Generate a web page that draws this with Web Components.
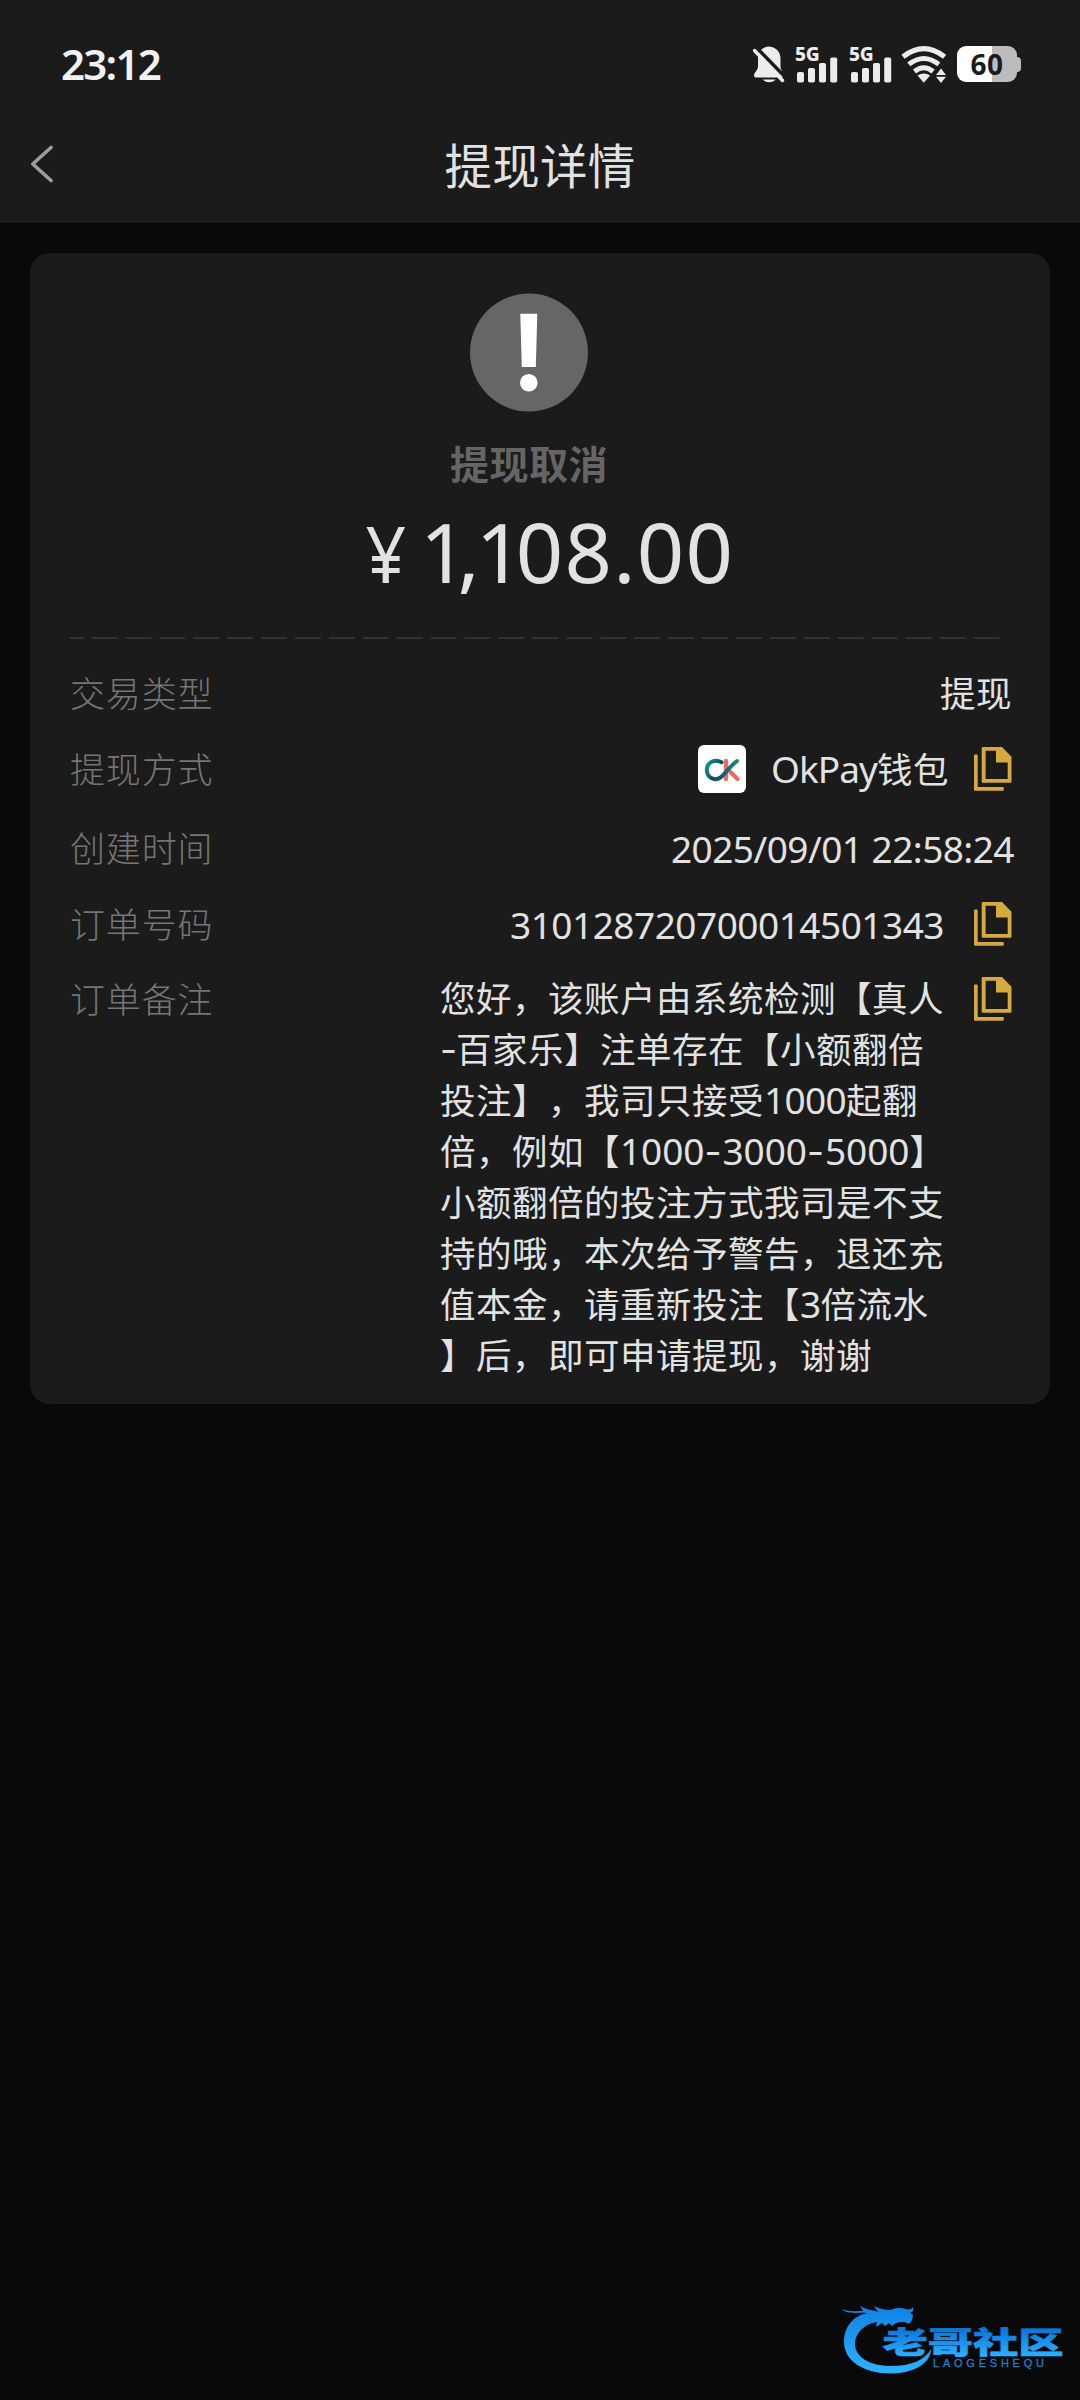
<!DOCTYPE html>
<html lang="zh-CN">
<head>
<meta charset="utf-8">
<title>提现详情</title>
<style>
  html, body { margin: 0; padding: 0; background: #090909; }
  body { width: 1080px; height: 2400px; overflow: hidden; position: relative;
    font-family: "Noto Sans", "Noto Sans CJK SC", sans-serif; color: #e2e2e2; text-spacing-trim: space-all; }
</style>
</head>
<body>
<withdraw-page></withdraw-page>
<script>
const define = (name, html, setup) => {
  const tpl = document.createElement('template');
  tpl.innerHTML = html.trim();
  customElements.define(name, class extends HTMLElement {
    connectedCallback() {
      if (this.shadowRoot) return;
      this.attachShadow({ mode: 'open' }).append(tpl.content.cloneNode(true));
      if (setup) setup(this, this.shadowRoot);
    }
  });
};

/* A run of text spread by letter-spacing to the width given in "w". */
define('fit-run', `<style>:host{display:inline-block;white-space:pre;text-align:left}:host([han]){font-size:35.500px}:host([dash]){font-family:Inter,sans-serif}span{display:inline-block}</style><span><slot></slot></span>`, (el, root) => {
  const span = root.querySelector('span');
  const w = parseFloat(el.getAttribute('w'));
  const n = [...el.textContent].length;
  const natural = span.getBoundingClientRect().width;
  span.style.letterSpacing = ((w - natural) / n) + 'px';
  el.style.width = w + 'px';
});

define('copy-icon', `
<style>:host{display:block;width:38px;height:44px;flex:none}svg{display:block}</style>
<svg width="38" height="44" viewBox="0 0 38 44" fill="#d6aa3f">
  <path fill-rule="evenodd" d="M8.7 0H28L37.5 9.7V34.7a1 1 0 0 1-1 1H8.7a1 1 0 0 1-1-1V1a1 1 0 0 1 1-1zM11.6 3.8V31.9H33.7V15.4H22V3.8z"/>
  <path d="M0 8.6q0-1 1-1H2.7q1 0 1 1V40H28.8q1 0 1 1v1.7q0 1-1 1H1q-1 0-1-1z"/>
</svg>`);

define('okpay-logo', `
<style>:host{display:block;width:48px;height:48px;flex:none;border-radius:6px;background:#fff}svg{display:block}</style>
<svg width="48" height="48" viewBox="0 0 48 48" fill="none" stroke-linecap="round">
  <defs><linearGradient id="g" x1="8" y1="16" x2="40" y2="32" gradientUnits="userSpaceOnUse">
    <stop offset="0" stop-color="#17a08f"/><stop offset=".4" stop-color="#0d4a66"/><stop offset=".6" stop-color="#0f5f72"/><stop offset="1" stop-color="#22b8a0"/></linearGradient></defs>
  <path d="M28 16V34" stroke="#ee6b63" stroke-width="4.4"/>
  <path d="M32.500 27L39.500 34" stroke="#ee6b63" stroke-width="4.200"/>
  <path d="M23.500 17.200C17 13.500 8.800 17 8.800 25C8.800 32.500 16.500 36.500 22.500 32.500C27 29.500 31 22 39 16.200" stroke="url(#g)" stroke-width="4"/>
</svg>`);

define('signal-icon', `
<style>:host{display:block;position:relative;width:43px;height:37px;flex:none}svg{display:block}
b{position:absolute;left:0;top:1px;font:800 19px/15px "Noto Sans",sans-serif;letter-spacing:-.3px;color:#ececec}</style>
<b>5G</b>
<svg width="43" height="37" viewBox="0 0 43 37" fill="#ececec">
  <rect x="2" y="26" width="7" height="10.500" rx="1.800"/><rect x="13" y="22" width="7" height="14.500" rx="1.800"/>
  <rect x="24" y="17" width="7" height="19.500" rx="1.800"/><rect x="35.200" y="11.500" width="7" height="25" rx="1.800"/>
</svg>`);

define('battery-icon', `
<style>:host{display:flex;align-items:center;width:64px;height:36px;flex:none}
.c{width:60px;height:36px;border-radius:9px;background:linear-gradient(90deg,#fff 35.500px,#bbb 35.500px);display:flex;align-items:center;justify-content:center;
font:700 28px/36px "Noto Sans",sans-serif;color:#1b1b1b}
.n{width:4px;height:15px;border-radius:0 4px 4px 0;background:#bbb}</style>
<div class="c"><fit-run w="33">60</fit-run></div><div class="n"></div>`);

define('status-bar', `
<style>:host{display:flex;height:110px;padding:0 59px 0 61px;box-sizing:border-box;justify-content:space-between;align-items:flex-start}
.t{font-weight:600;font-size:42px;line-height:60px;margin-top:34px;color:#f2f2f2}
.i{display:flex;margin-top:46px;align-items:flex-start}
svg{display:block}.bell{margin:-1px 10px 0 0}.s2{margin-left:11px}.wifi{margin:0 10px 0 9px}</style>
<div class="t"><fit-run w="99">23:12</fit-run></div>
<div class="i">
  <svg class="bell" width="32" height="38" viewBox="0 0 32 38">
    <path d="M16 1.500C8.700 2 5 7.500 5 13.500V21C5 25.500 1 27 1 30.500Q1 32.500 3 32.500H28.500Q30.500 32.500 30.500 30.500C30.500 27 27.500 25.500 27.500 21V13.500C27.500 7.500 23.500 2 16 1.500z" fill="#ececec"/>
    <path d="M10 34.500H22.500Q20.500 37.200 16.200 37.200T10 34.500z" fill="#ececec"/>
    <path d="M2.800 2L32 31.800" stroke="#1b1b1b" stroke-width="3.500"/>
    <path d="M1.500 5.500L29.500 35.500" stroke="#ececec" stroke-width="3.400" stroke-linecap="round"/>
  </svg>
  <signal-icon></signal-icon><signal-icon class="s2"></signal-icon>
  <svg class="wifi" width="46" height="37" viewBox="0 0 46 37" fill="none" stroke="#ececec" stroke-width="5">
    <path d="M2 10.700Q22.800-5.500 43.600 10.700"/><path d="M7.800 18.400Q22.800 6.500 37.800 18.400"/><path d="M13.500 25.500Q22.800 18 32.100 25.500"/>
    <path d="M16.500 29.500Q22.800 25.500 29.100 29.500L22.800 36.800z" fill="#ececec" stroke="none"/>
    <path d="M40 22.500L45 29H35zM40 37L45 30.800H35z" fill="#ececec" stroke="none"/>
  </svg>
  <battery-icon></battery-icon>
</div>`);

define('nav-bar', `
<style>:host{display:grid;grid-template-columns:100px 1fr 100px;height:108px;align-items:center}
svg{display:block;margin:-1px 0 0 30px}
h1{margin:0;font:400 47.500px/70px "Noto Sans CJK SC",sans-serif;text-align:center;color:#e2e2e2}</style>
<svg width="24" height="38" viewBox="0 0 24 38" fill="none" stroke="#9d9d9d" stroke-width="3.600" stroke-linecap="round" stroke-linejoin="round"><path d="M21 2.500L2.800 19L21 35.500"/></svg>
<h1><fit-run w="191">提现详情</fit-run></h1>`);

define('result-summary', `
<style>:host{display:flex;flex-direction:column;align-items:center;width:918px;height:344px}
svg{display:block}
h2{margin:18px 0 0;font:700 39px/64px "Noto Sans CJK SC",sans-serif;color:#656565}
.a{font-size:83px;line-height:90px;margin:12px 0 0 37px;white-space:pre;color:#e2e2e2}
.y{font-size:79px;display:inline-block;transform:scaleX(.9);transform-origin:100% 50%;margin-right:14px}
.k1{letter-spacing:-10px}.k2{letter-spacing:-4px}.k3{letter-spacing:-7.500px}.k4{letter-spacing:1.300px}</style>
<svg width="118" height="119" viewBox="0 0 118 119"><circle cx="59" cy="59.500" r="59" fill="#666"/><path d="M50.300 20.700H67.300L65.800 74H51.800z" fill="#fff"/><circle cx="58.800" cy="89.700" r="8.800" fill="#fff"/></svg>
<h2><fit-run w="158">提现取消</fit-run></h2>
<div class="a"><span class="y">¥</span><span class="k1">1</span><span class="k2">,</span><span class="k3">1</span><span class="k4">08.00</span></div>`);

define('dash-rule', `
<style>:host{display:block;width:930px;height:2px;background:linear-gradient(90deg,#323232 25.500px,transparent 25.500px) -12.500px 0/33.930px 2px repeat-x}</style>`);

define('detail-row', `
<style>:host{display:flex;justify-content:space-between;align-items:center;height:76px;width:942px}
:host([top]){align-items:flex-start;height:auto}
.l{font:300 35px/51px "Noto Sans CJK SC",sans-serif;color:#757575;margin-top:-4px}
:host([top]) .l{margin-top:-1px}
.v{display:flex;align-items:center;font-size:37px;line-height:51px;color:#e2e2e2}
:host([top]) .v{align-items:flex-start}</style>
<div class="l"></div><div class="v"><slot></slot></div>`, (el, root) => {
  const f = document.createElement('fit-run');
  f.setAttribute('w', '143.5');
  f.textContent = el.getAttribute('label');
  root.querySelector('.l').append(f);
});

define('remark-text', `
<style>:host{display:block;width:510px;margin-top:-1px;font-size:37px;line-height:51px}
div{white-space:pre;height:51px}</style>
<div><fit-run han w="504">您好，该账户由系统检测【真人</fit-run></div>
<div><fit-run dash w="16">-</fit-run><fit-run han w="468">百家乐】注单存在【小额翻倍</fit-run></div>
<div><fit-run han w="324">投注】，我司只接受</fit-run><fit-run w="82">1000</fit-run><fit-run han w="72">起翻</fit-run></div>
<div><fit-run han w="180">倍，例如【</fit-run><fit-run w="84.500">1000</fit-run><fit-run dash w="18">-</fit-run><fit-run w="84.500">3000</fit-run><fit-run dash w="18">-</fit-run><fit-run w="84.500">5000</fit-run><fit-run han w="36">】</fit-run></div>
<div><fit-run han w="504">小额翻倍的投注方式我司是不支</fit-run></div>
<div><fit-run han w="504">持的哦，本次给予警告，退还充</fit-run></div>
<div><fit-run han w="360">值本金，请重新投注【</fit-run><fit-run w="20.500">3</fit-run><fit-run han w="108">倍流水</fit-run></div>
<div><fit-run han w="432">】后，即可申请提现，谢谢</fit-run></div>`);

define('site-mark', `
<style>:host{position:absolute;left:840px;top:2300px;display:block;width:226px;height:76px}svg{display:block}</style>
<svg width="226" height="76" viewBox="0 0 226 76">
  <defs><linearGradient id="b" x1="0" y1="5" x2="0" y2="72" gradientUnits="userSpaceOnUse"><stop offset="0" stop-color="#0f80e4"/><stop offset="1" stop-color="#2bb2ff"/></linearGradient>
  <linearGradient id="t" x1="0" y1="0" x2="0" y2="1"><stop offset=".3" stop-color="#0d78d8"/><stop offset=".85" stop-color="#2aaeff"/></linearGradient></defs>
  <path fill="url(#b)" d="M2 9C8 12 16 11 23 11L20 6C27 10 33 10 38 12L34 6C41 9 46 10 51 10C56 7 62 8 66 9C69 10 72 9 73 7C74 10 73 12 70 13L73 15L72 20L69 24C65 21 60 22 56 23L52 26L49 23L45 26L42 23L36 27L37 22C24 24 15 33 15 44C15 57 30 66 51 66C71 66 85 60 91 49C91 64 72 73.500 51 73.500C24 73.500 4 61 4 42C4 27 13 16 27 13C19 12 7 15 2 9z"/>
  <text x="42.500" y="52.600" font-family="'Noto Sans CJK SC',sans-serif" font-weight="900" font-size="30" textLength="181" lengthAdjust="spacingAndGlyphs" fill="url(#t)" stroke="url(#t)" stroke-width=".6">老哥社区</text>
  <text x="93" y="66.800" font-family="'Liberation Sans',sans-serif" font-size="11" textLength="111" fill="#2080c8" stroke="#2080c8" stroke-width=".3">LAOGESHEQU</text>
</svg>`);

define('withdraw-page', `
<style>
:host{display:block}
header{background:#1b1b1b;height:222.500px}
main{padding:30.500px 30px 0}
.card{box-sizing:border-box;height:1151px;border-radius:20px;background:#1b1b1b;padding:40px 37px 0 40px}
.rows{padding-top:16px}
.m1{margin:0 25px 0 25px;white-space:nowrap}.m3{margin-left:30px}
</style>
<header><status-bar></status-bar><nav-bar></nav-bar></header>
<main><section class="card">
  <result-summary></result-summary>
  <dash-rule></dash-rule>
  <div class="rows">
    <detail-row label="交易类型"><fit-run han w="72">提现</fit-run></detail-row>
    <detail-row label="提现方式"><okpay-logo></okpay-logo><span class="m1"><fit-run w="106">OkPay</fit-run><fit-run han w="72">钱包</fit-run></span><copy-icon></copy-icon></detail-row>
    <detail-row label="创建时间" style="height:83px"><fit-run w="343" style="margin-right:-2px">2025/09/01 22:58:24</fit-run></detail-row>
    <detail-row label="订单号码" style="height:68px"><fit-run w="434">310128720700014501343</fit-run><copy-icon class="m3"></copy-icon></detail-row>
    <detail-row label="订单备注" top style="padding-top:15px"><remark-text></remark-text><copy-icon style="margin:4px 0 0 24px"></copy-icon></detail-row>
  </div>
</section></main>
<site-mark></site-mark>`);
</script>
</body>
</html>
